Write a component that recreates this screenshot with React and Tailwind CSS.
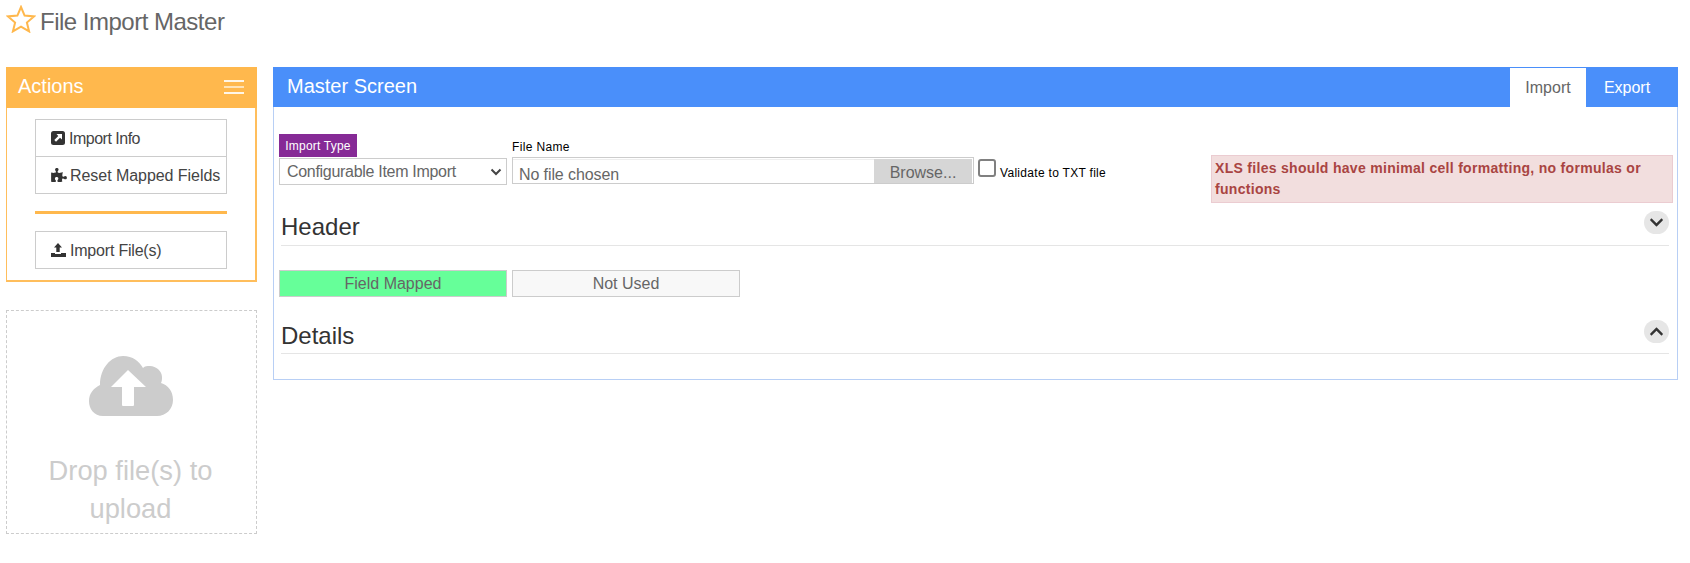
import React from "react";
import { FaPuzzlePiece, FaChevronDown, FaChevronUp } from "react-icons/fa";

const font = "font-['Liberation_Sans',Arial,sans-serif]";

function StarIcon() {
  return (
    <svg width="30" height="28" viewBox="0 0 30 28" className="shrink-0">
      <path
        d="M15 2L18.6 10.6L28 11.4L20.9 17.5L23.1 26.4L15 21.6L6.9 26.4L9.1 17.5L2 11.4L11.4 10.6Z"
        fill="none"
        stroke="#ffb84d"
        strokeWidth="2"
        strokeLinejoin="miter"
      />
    </svg>
  );
}

function ExtIcon() {
  return (
    <svg width="14" height="14" viewBox="0 0 14 14" className="shrink-0">
      <rect width="14" height="14" rx="2.5" fill="#333" />
      <path d="M5.5 3H11V8.5L9 6.7L5 10.7L3.3 9L7.3 5Z" fill="#fff" />
    </svg>
  );
}

function UploadIcon() {
  return (
    <svg width="15" height="14" viewBox="0 0 15 14" className="shrink-0">
      <path d="M7 0L11 4.5H8.7V9H5.3V4.5H3Z" fill="#333" />
      <path d="M0 10H4V11H10V10H15V14H0Z" fill="#333" />
    </svg>
  );
}

function CloudIcon() {
  return (
    <svg width="84" height="62" viewBox="0 0 84 62" className="block">
      <path
        d="M14 61C5 61 0 54 0 46C0 38 5 33 11 30C11 13 22 1 34 1C44 1 50 6 54 13C56 11 58 11 61 11C67 11 73 16 73 22C73 24 73 26 72 28C79 30 84 36 84 45C84 54 77 61 68 61Z"
        fill="#cccccc"
      />
      <path d="M39 15L57 32H45V50Q45 51 44 51H34Q33 51 33 50V32H22Z" fill="#fff" />
    </svg>
  );
}

function ActionButton({ icon, children, className = "" }) {
  return (
    <div className={"h-[38px] border border-[#cccccc] flex items-center pl-[15px] gap-[4px] text-[16px] text-[#444444] whitespace-nowrap " + className}>
      {icon}
      <span className="pt-[1px]">{children}</span>
    </div>
  );
}

function Toggle({ up }) {
  return (
    <div className="w-[25px] h-[23px] rounded-full bg-[#e6e6e6] flex items-center justify-center text-[#333333] text-[15px]">
      {up ? <FaChevronUp /> : <FaChevronDown />}
    </div>
  );
}

function Section({ title, up, className = "" }) {
  return (
    <div className={"flex items-start justify-between border-b border-[#e5e5e5] ml-[2px] " + className}>
      <div className="text-[24px] leading-[28px] mt-[2px] text-[#333333]">{title}</div>
      <Toggle up={up} />
    </div>
  );
}

export default function App() {
  return (
    <div className={font + " bg-white h-[563px] w-full overflow-hidden text-[#333333]"}>
      <div className="h-[67px] pl-[6px] pt-[5px] flex items-start gap-[4px]">
        <StarIcon />
        <div className="text-[24px] leading-[36px] -mt-[1px] text-[#666666] tracking-[-0.5px]">File Import Master</div>
      </div>

      <div className="flex items-start pl-[6px] pr-[12px] gap-[16px]">
        <div className="w-[251px] shrink-0 flex flex-col gap-[28px]">
          <div className="border-l border-t border-r-2 border-b-2 border-[#ffbe5c] h-[215px]">
            <div className="h-[41px] -ml-[1px] -mr-[2px] -mt-[1px] bg-[#ffb84d] flex items-center justify-between pl-[12px] pr-[13px] text-white text-[20px]">
              <span className="-mt-[3px]">Actions</span>
              <div className="flex flex-col gap-[4px] w-[20px] -mt-[2px]">
                <div className="h-[2px] bg-[#ffffffdd]" />
                <div className="h-[2px] bg-[#ffffff99]" />
                <div className="h-[2px] bg-[#ffffffdd]" />
              </div>
            </div>
            <div className="px-[28px] pt-[11px]">
              <ActionButton icon={<ExtIcon />} className="tracking-[-0.5px]">Import Info</ActionButton>
              <ActionButton icon={<FaPuzzlePiece className="w-[16px] h-[14px] shrink-0 text-[#333333]" />} className="-mt-[1px] !gap-[3px] tracking-[-0.05px]">Reset Mapped Fields</ActionButton>
              <div className="h-[3px] bg-[#ffb84d] mt-[17px] mb-[17px]" />
              <ActionButton icon={<UploadIcon />} className="tracking-[-0.2px]">Import File(s)</ActionButton>
            </div>
          </div>

          <div className="border border-dashed border-[#cccccc] h-[224px] flex flex-col items-center pt-[44px] pr-[2px]">
            <CloudIcon />
            <div className="mt-[35px] text-[27.3px] leading-[38px] text-[#cccccc] text-center w-[190px]">Drop file(s) to upload</div>
          </div>
        </div>

        <div className="flex-1 min-w-0 border border-[#b8cff5] h-[313px]">
          <div className="h-[40px] bg-[#4a8ffa] -mx-[1px] -mt-[1px] flex items-stretch justify-between pl-[14px]">
            <div className="text-white text-[20px] self-center -mt-[2px]">Master Screen</div>
            <div className="flex items-stretch pt-[1px] text-[16px] pr-[1px]">
              <div className="w-[76px] bg-white text-[#666666] flex items-center justify-center">Import</div>
              <div className="w-[91px] text-white flex items-center justify-center pr-[9px]">Export</div>
            </div>
          </div>

          <div className="pl-[5px] pr-[8px]">
            <div className="flex items-start pt-[27px]">
              <div className="w-[228px] shrink-0">
                <div className="w-[78px] h-[23px] bg-[#862a96] text-white text-[12px] flex items-center justify-center tracking-[0.2px]">Import Type</div>
                <div className="mt-[1px] h-[27px] border border-[#cccccc] flex items-center justify-between pl-[7px] pr-[4px] text-[16px] text-[#666666] tracking-[-0.3px]">
                  <span>Configurable Item Import</span>
                  <svg width="12" height="8" viewBox="0 0 12 8"><path d="M1.5 1.5L6 6L10.5 1.5" fill="none" stroke="#444" strokeWidth="2" /></svg>
                </div>
              </div>
              <div className="w-[462px] ml-[5px] shrink-0">
                <div className="text-[12px] leading-[14px] mt-[6px] text-black tracking-[0.35px]">File Name</div>
                <div className="mt-[3px] h-[27px] border border-[#cccccc] flex items-stretch pt-[1px] pr-[1px]">
                  <div className="flex-1 pl-[6px] pt-[5px] text-[16px] leading-[20px] text-[#666666] tracking-[-0.1px] border-t border-[#eeeeee] overflow-hidden">No file chosen</div>
                  <div className="w-[98px] bg-[#d6d6d6] text-[#666666] text-[16px] flex items-center justify-center pt-[3px]">Browse...</div>
                </div>
              </div>
              <div className="flex items-start ml-[4px] mt-[25px]">
                <div className="w-[18px] h-[18px] border-2 border-[#808080] rounded-[3px] bg-white" />
                <span className="text-[12px] leading-[14px] mt-[7px] ml-[4px] text-black tracking-[0.3px]">Validate to TXT file</span>
              </div>
              <div className="ml-auto w-[462px] h-[48px] mt-[21px] -mr-[4px] border border-[#ebccd1] bg-[#f2dede] text-[#a94442] font-bold text-[14px] leading-[21px] pl-[3px] pt-[2px] tracking-[0.3px] shrink-0">
                XLS files should have minimal cell formatting, no formulas or functions
              </div>
            </div>

            <Section title="Header" className="mt-[8px] h-[35px]" />

            <div className="flex gap-[5px] mt-[24px]">
              <div className="w-[228px] h-[27px] border border-[#cccccc] bg-[#66ff99] text-[#666666] text-[16px] flex items-center justify-center">Field Mapped</div>
              <div className="w-[228px] h-[27px] border border-[#cccccc] bg-[#f8f8f8] text-[#666666] text-[16px] flex items-center justify-center">Not Used</div>
            </div>

            <Section title="Details" up className="mt-[23px] h-[34px]" />
          </div>
        </div>
      </div>
    </div>
  );
}
